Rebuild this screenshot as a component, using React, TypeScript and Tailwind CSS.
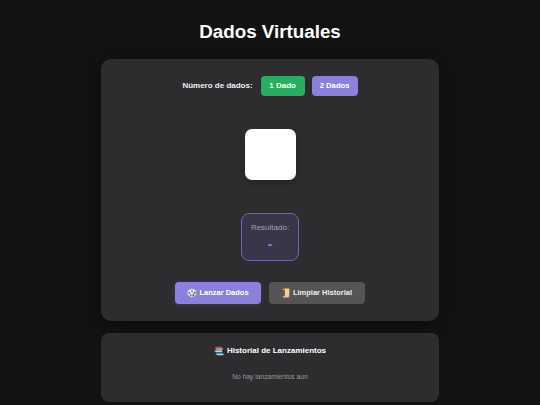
import { useState } from 'react'

function DiceIcon() {
  return (
    <svg width="10" height="10" viewBox="0 0 16 16" className="shrink-0">
      <path d="M8 1 15 4.500 8 8 1 4.500Z" fill="#f4f4f6" />
      <path d="M1 4.500 8 8V15L1 11.500Z" fill="#dcdce2" />
      <path d="M15 4.500 8 8V15L15 11.500Z" fill="#c4c4cd" />
      <circle cx="8" cy="4.500" r="1.500" fill="#d8343f" />
      <circle cx="3.500" cy="8" r="1.100" fill="#3a3a44" />
      <circle cx="6" cy="11.500" r="1.100" fill="#3a3a44" />
      <circle cx="12.500" cy="7.500" r="1.100" fill="#3a3a44" />
      <circle cx="10.200" cy="11.500" r="1.100" fill="#3a3a44" />
    </svg>
  )
}

function ScrollIcon() {
  return (
    <svg width="9" height="10" viewBox="0 0 16 18" className="shrink-0">
      <path d="M3 1H13V14C13 16 12 17 11 17H2C1 17 1 15 2.500 15H5V3C5 2 4 1 3 1Z" fill="#f2cf8f" />
      <path d="M3 1C2 1 1 2 1 4H5V3C5 2 4 1 3 1Z" fill="#d99a4e" />
      <path d="M13 14V16C13 17 12 17 11 17C12 17 12 15 11 15Z" fill="#d99a4e" />
    </svg>
  )
}

function BooksIcon() {
  return (
    <svg width="10" height="10" viewBox="0 0 16 16" className="shrink-0">
      <path d="M2 1H12L14 3V6H4L2 4Z" fill="#d8474a" />
      <path d="M4 4.400H13.500V5.600H4Z" fill="#f1f1f1" />
      <path d="M1 6.500H13V10.500H3L1 8.500Z" fill="#5fa8c0" />
      <path d="M3 8.400H13V9.500H3Z" fill="#eeeeee" />
      <path d="M3 11H15V15H5L3 13Z" fill="#3f8f9f" />
      <path d="M5 12.800H15V14H5Z" fill="#eeeeee" />
    </svg>
  )
}

export default function App() {
  const [count, setCount] = useState(1)

  return (
    <div className="min-h-[405px] overflow-hidden bg-[#121212] px-[101px] pt-[19px] font-['Liberation_Sans',Arial,sans-serif] text-white">
      <h1 className="mb-[14px] text-center text-[18.800px] leading-[26px] font-bold">Dados Virtuales</h1>

      <section className="flex h-[262px] flex-col items-center rounded-[10px] bg-[#2d2d2f] shadow-[0_4px_16px_rgba(0,0,0,0.3)]">
        <div className="mt-[17px] flex h-[20px] items-center">
          <span className="mr-2 text-[8px] font-bold text-[#f0f0f0]">Número de dados:</span>
          <button
            onClick={() => setCount(1)}
            className={`h-[20px] w-[44px] rounded-[4px] text-[8px] font-bold ${count === 1 ? 'bg-[#27ae60]' : 'bg-[#8b80db]'}`}
          >
            1 Dado
          </button>
          <button
            onClick={() => setCount(2)}
            className={`ml-[7px] h-[20px] w-[46px] rounded-[4px] text-[7.700px] font-bold ${count === 2 ? 'bg-[#27ae60]' : 'bg-[#8b80db]'}`}
          >
            2 Dados
          </button>
        </div>

        <div className="mt-[33px] h-[51px] w-[51px] rounded-[7px] bg-white shadow-[0_3px_10px_rgba(0,0,0,0.2)]" />

        <div className="mt-[33px] flex h-[48px] w-[58px] flex-col items-center rounded-[8px] border border-[#6f66b0] bg-[#39364a]">
          <span className="mt-[8px] text-[8px] leading-[11px] text-[#a3a3a6]">Resultado:</span>
          <span className="mt-[3px] text-[14px] leading-[16px] font-bold text-[#8b80db]">-</span>
        </div>

        <div className="mt-[21px] flex gap-2">
          <button className="flex h-[22px] w-[86px] items-center justify-center gap-[2px] rounded-[4px] bg-[#8b80db] text-[7.500px] font-bold shadow-[0_1px_5px_rgba(139,128,219,0.2)]">
            <DiceIcon />
            Lanzar Dados
          </button>
          <button className="flex h-[22px] w-[96px] items-center justify-center gap-[2px] rounded-[4px] bg-[#555555] text-[7.500px] font-bold text-[#eeeeee]">
            <ScrollIcon />
            Limpiar Historial
          </button>
        </div>
      </section>

      <section className="mt-[12px] flex h-[69px] flex-col items-center rounded-[8px] bg-[#2d2d2f]">
        <h2 className="mt-[12px] flex items-center gap-[3px] text-[8px] leading-[12px] font-bold">
          <BooksIcon />
          Historial de Lanzamientos
        </h2>
        <p className="mt-[15px] text-[6.700px] leading-[9px] text-[#99999c]">No hay lanzamientos aún</p>
      </section>
    </div>
  )
}
